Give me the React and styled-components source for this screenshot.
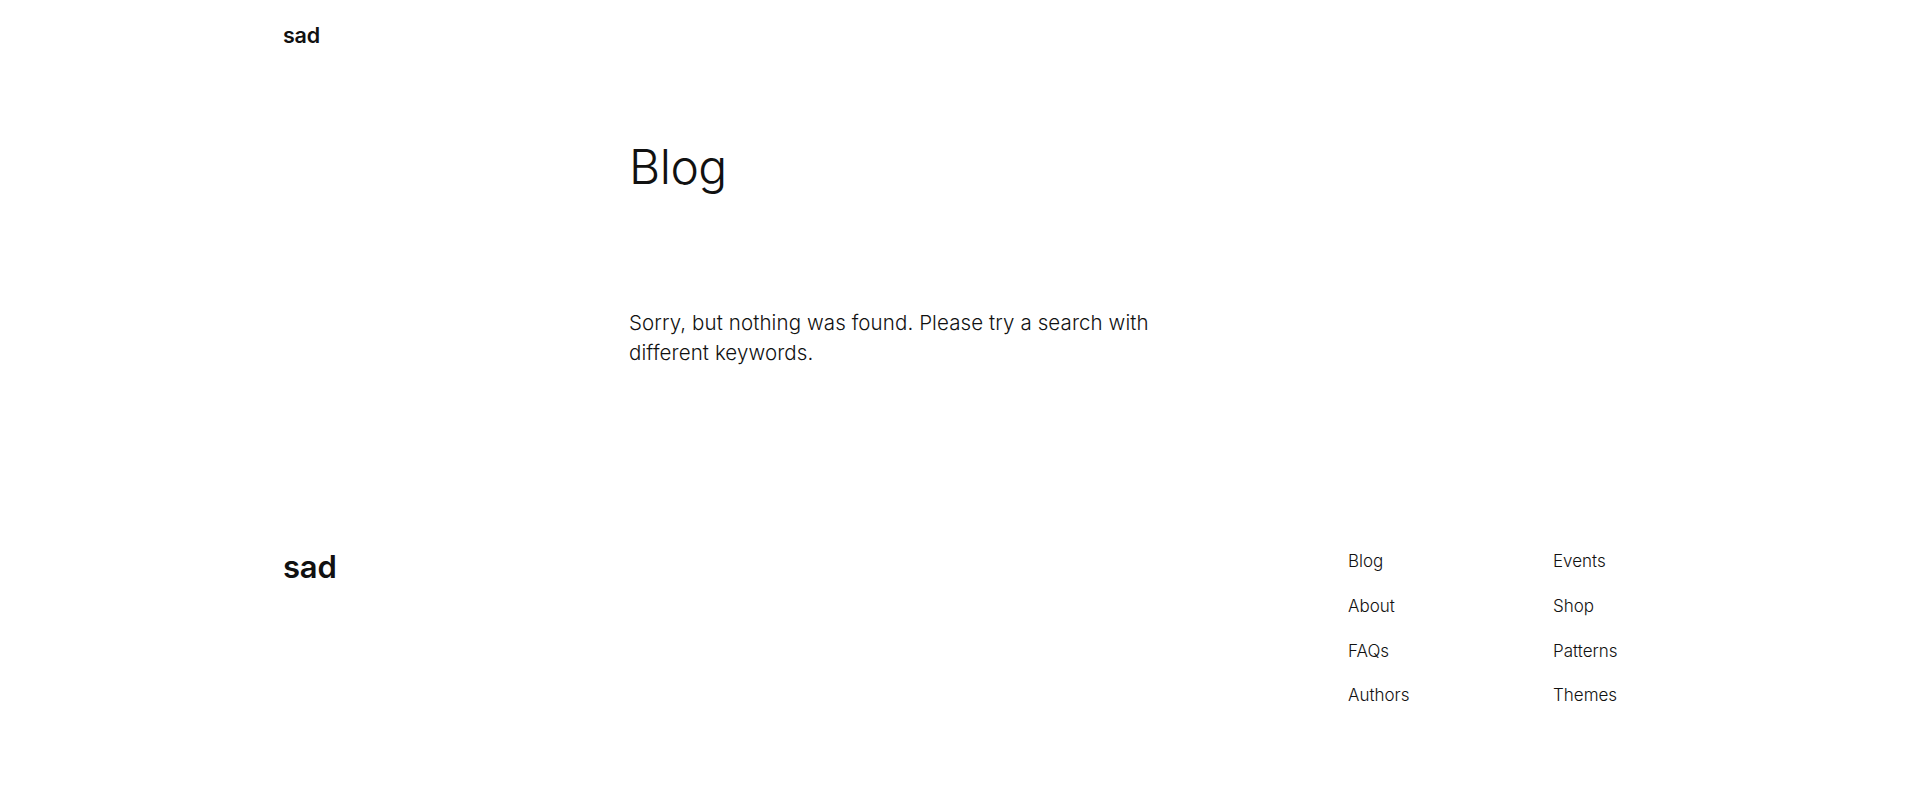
import React from 'react';
import styled, { createGlobalStyle } from 'styled-components';

const GlobalStyle = createGlobalStyle`
  html, body {
    margin: 0;
    padding: 0;
    background: #ffffff;
  }

  body {
    font-family: Inter, "Noto Sans", "Liberation Sans", sans-serif;
    color: #111111;
    -webkit-font-smoothing: antialiased;
  }

  a {
    color: inherit;
    text-decoration: none;
  }
`;

const Page = styled.div`
  min-height: 902px;
  padding-right: 15px;
  display: flex;
  flex-direction: column;
`;

const Wide = styled.div`
  width: 1339px;
  margin: 0 auto;
`;

const Header = styled.header`
  padding: 22.5px 0 0;
`;

const SiteTitle = styled.a`
  display: inline-block;
  font-size: ${(p) => (p.$large ? '31px' : '21.5px')};
  font-weight: 600;
  line-height: 1.2;
  letter-spacing: -0.2px;
`;

const Main = styled.main`
  width: 647px;
  margin: 0 auto;
  padding-top: 90px;
`;

const PageTitle = styled.h1`
  margin: 0;
  font-size: 48px;
  font-weight: 300;
  line-height: 1.2;
  letter-spacing: -0.5px;
`;

const Notice = styled.p`
  margin: 112px 0 0;
  max-width: 560px;
  font-size: 20.5px;
  font-weight: 350;
  line-height: 30px;
  letter-spacing: 0.1px;
`;

const Footer = styled.footer`
  padding: 180.5px 0 195px;
`;

const FooterRow = styled(Wide)`
  display: flex;
  justify-content: space-between;
  align-items: flex-start;
`;

const FooterNav = styled.nav`
  display: grid;
  grid-template-columns: 205px 69px;
`;

const LinkColumn = styled.ul`
  list-style: none;
  margin: 0;
  padding: 0;
  display: flex;
  flex-direction: column;
  gap: 18.7px;
`;

const FooterLink = styled.a`
  display: block;
  font-size: 17px;
  font-weight: 350;
  line-height: 26px;
  white-space: nowrap;
`;

const columns = [
  ['Blog', 'About', 'FAQs', 'Authors'],
  ['Events', 'Shop', 'Patterns', 'Themes'],
];

export default function App() {
  return (
    <Page>
      <GlobalStyle />
      <Header>
        <Wide>
          <SiteTitle href="#">sad</SiteTitle>
        </Wide>
      </Header>

      <Main>
        <PageTitle>Blog</PageTitle>
        <Notice>
          Sorry, but nothing was found. Please try a search with different keywords.
        </Notice>
      </Main>

      <Footer>
        <FooterRow>
          <SiteTitle href="#" $large>sad</SiteTitle>
          <FooterNav>
            {columns.map((col, i) => (
              <LinkColumn key={i}>
                {col.map((label) => (
                  <li key={label}>
                    <FooterLink href="#">{label}</FooterLink>
                  </li>
                ))}
              </LinkColumn>
            ))}
          </FooterNav>
        </FooterRow>
      </Footer>
    </Page>
  );
}
